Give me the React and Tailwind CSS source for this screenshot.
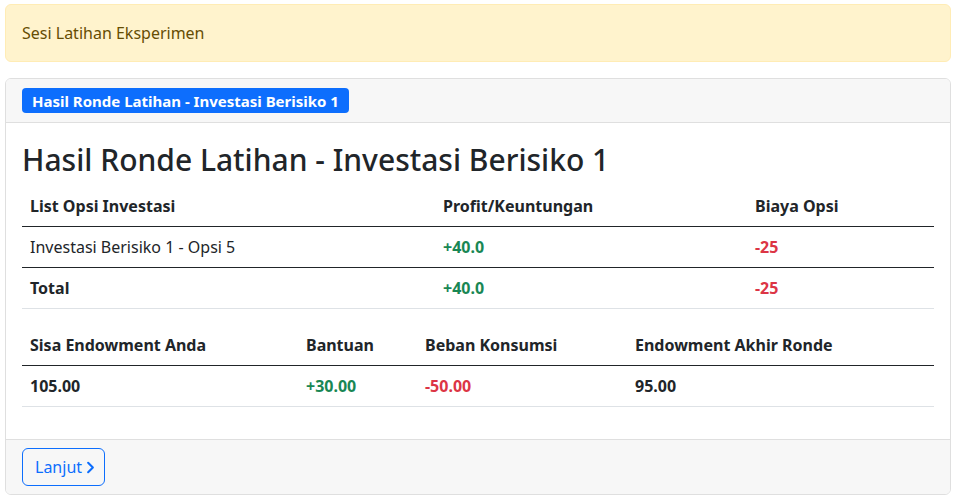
import { ChevronRight } from 'lucide-react'

const rows = [{ name: 'Investasi Berisiko 1 - Opsi 5', profit: '+40.0', cost: '-25' }]

const App = () => {
  return (
    <div className="min-h-[499px] bg-white pl-[5px] pr-[7px] pt-[4px] text-[16px] leading-6 text-[#212529] font-['Noto_Sans',sans-serif]">
      <div className="h-[58px] flex items-center px-4 rounded-md border border-[#ffecb5] bg-[#fff3cd] text-[#664d03]">
        Sesi Latihan Eksperimen
      </div>

      <div className="mt-4 rounded-md border border-[#dfdfdf] overflow-hidden">
        <div className="h-[44px] flex items-center px-4 bg-[#f7f7f7] border-b border-[#dfdfdf]">
          <span className="h-[25px] flex items-center px-[10px] rounded bg-[#0d6efd] text-white text-[15px] font-bold">
            Hasil Ronde Latihan - Investasi Berisiko 1
          </span>
        </div>

        <div className="px-4 pt-4 pb-4">
          <h2 className="text-[30px] leading-[36px] font-medium mt-[3px] mb-2">Hasil Ronde Latihan - Investasi Berisiko 1</h2>

          <table className="w-full mb-4 border-collapse">
            <colgroup>
              <col className="w-[413px]" />
              <col className="w-[312px]" />
              <col />
            </colgroup>
            <thead>
              <tr className="border-b border-[#212529]">
                <th className="text-left font-bold px-2 py-2">List Opsi Investasi</th>
                <th className="text-left font-bold px-2 py-2">Profit/Keuntungan</th>
                <th className="text-left font-bold px-2 py-2">Biaya Opsi</th>
              </tr>
            </thead>
            <tbody>
              {rows.map((r) => (
                <tr key={r.name} className="border-b border-[#212529]">
                  <td className="px-2 py-2">{r.name}</td>
                  <td className="px-2 py-2 font-bold text-[#198754]">{r.profit}</td>
                  <td className="px-2 py-2 font-bold text-[#dc3545]">{r.cost}</td>
                </tr>
              ))}
              <tr className="border-b border-[#dee2e6]">
                <td className="px-2 py-2 font-bold">Total</td>
                <td className="px-2 py-2 font-bold text-[#198754]">+40.0</td>
                <td className="px-2 py-2 font-bold text-[#dc3545]">-25</td>
              </tr>
            </tbody>
          </table>

          <table className="w-full mb-4 border-collapse">
            <colgroup>
              <col className="w-[276px]" />
              <col className="w-[119px]" />
              <col className="w-[210px]" />
              <col />
            </colgroup>
            <thead>
              <tr className="border-b border-[#212529]">
                <th className="text-left font-bold px-2 py-2">Sisa Endowment Anda</th>
                <th className="text-left font-bold px-2 py-2">Bantuan</th>
                <th className="text-left font-bold px-2 py-2">Beban Konsumsi</th>
                <th className="text-left font-bold px-2 py-2">Endowment Akhir Ronde</th>
              </tr>
            </thead>
            <tbody>
              <tr className="border-b border-[#dee2e6]">
                <td className="px-2 py-2 font-bold">105.00</td>
                <td className="px-2 py-2 font-bold text-[#198754]">+30.00</td>
                <td className="px-2 py-2 font-bold text-[#dc3545]">-50.00</td>
                <td className="px-2 py-2 font-bold">95.00</td>
              </tr>
            </tbody>
          </table>
        </div>

        <div className="px-4 py-2 bg-[#f7f7f7] border-t border-[#dfdfdf]">
          <button className="h-[38px] w-[83px] pl-3 flex items-center gap-[1px] rounded-md border border-[#0d6efd] text-[#0d6efd] bg-transparent">
            Lanjut
            <ChevronRight size={19} strokeWidth={2.6} className="-ml-[2px]" />
          </button>
        </div>
      </div>
    </div>
  )
}

export default App
